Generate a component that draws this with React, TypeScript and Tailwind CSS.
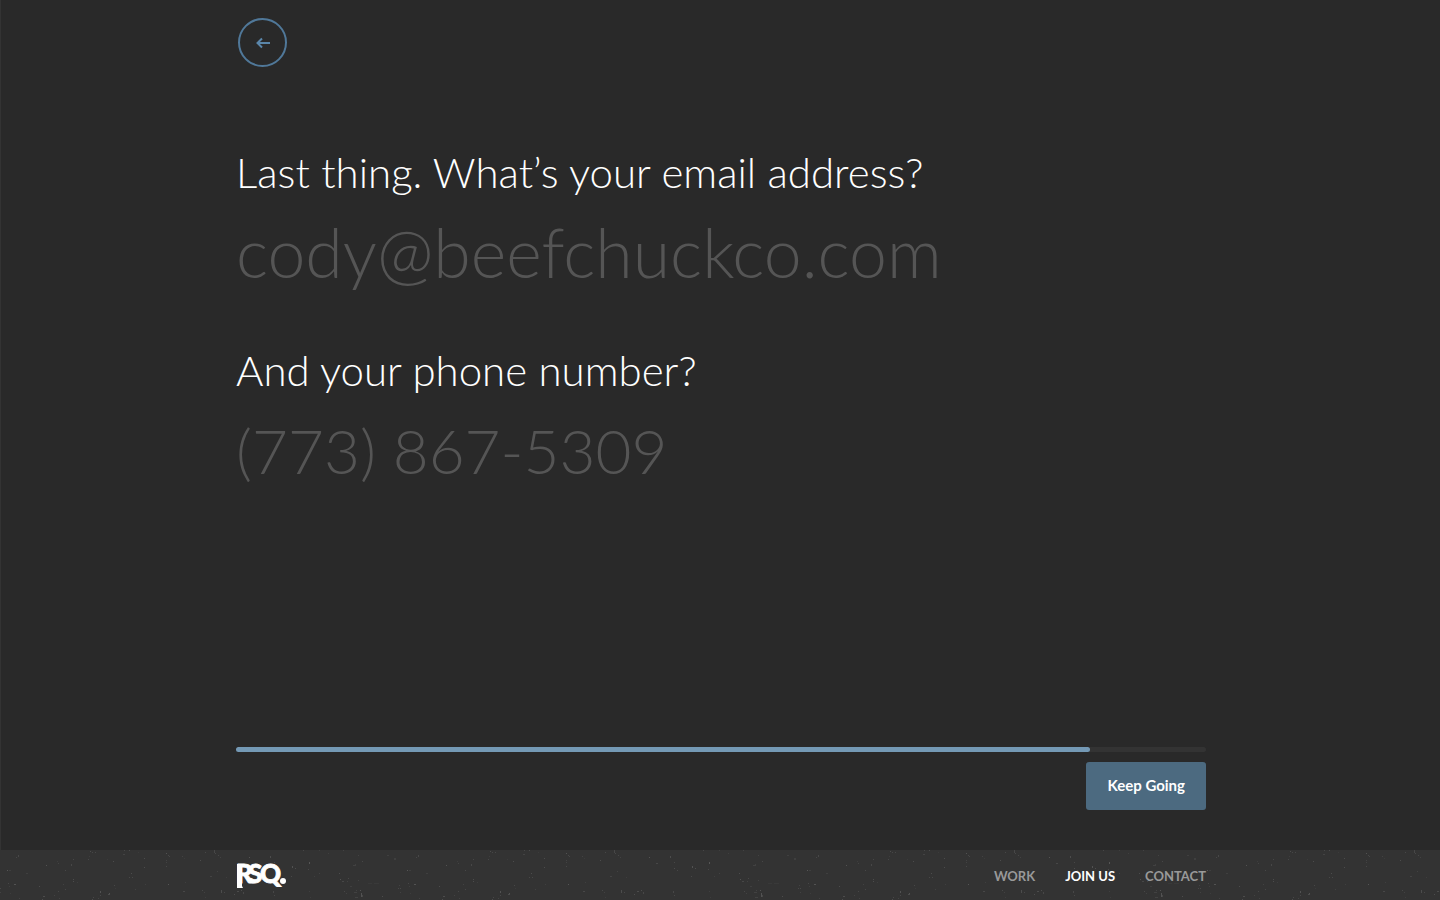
import { useState } from 'react';
import type { FormEvent } from 'react';

interface QuestionProps {
  id: string;
  type: string;
  label: string;
  placeholder: string;
  value: string;
  inputClass: string;
  onChange: (value: string) => void;
}

const NAV_LINKS = [
  { label: 'Work', href: '#work', active: false },
  { label: 'Join Us', href: '#join', active: true },
  { label: 'Contact', href: '#contact', active: false },
];

// x, y, width, height, opacity of each speck in the 400px paper tile
const SPECKS = [
  [18, 5, 1, 2, 0.2], [16, 7, 1, 1, 0.2], [7, 20, 1, 1, 0.35], [9, 20, 2, 1, 0.12],
  [26, 23, 2, 1, 0.12], [46, 15, 1, 1, 0.3], [57, 11, 1, 1, 0.1], [58, 13, 1, 1, 0.16],
  [71, 14, 1, 2, 0.2], [73, 9, 1, 1, 0.2], [65, 20, 1, 1, 0.2], [90, 1, 1, 1, 0.25],
  [92, 2, 1, 1, 0.2], [95, 2, 1, 1, 0.2], [88, 9, 1, 1, 0.2], [89, 6, 1, 1, 0.1],
  [107, 9, 1, 1, 0.08], [113, 11, 1, 1, 0.25], [124, 0, 1, 1, 0.2], [129, 0, 1, 1, 0.25],
  [123, 4, 2, 1, 0.16], [138, 2, 1, 1, 0.08], [144, 8, 1, 1, 0.25], [144, 17, 1, 1, 0.25],
  [131, 23, 1, 1, 0.25], [129, 27, 1, 1, 0.2], [132, 27, 1, 1, 0.2], [166, 3, 1, 1, 0.3],
  [168, 5, 1, 1, 0.2], [169, 6, 1, 1, 0.2], [166, 10, 1, 1, 0.15], [166, 12, 1, 1, 0.15],
  [166, 16, 1, 1, 0.2], [182, 6, 1, 1, 0.15], [184, 8, 1, 1, 0.08], [200, 10, 1, 1, 0.25],
  [205, 2, 1, 1, 0.2], [214, 0, 1, 3, 0.2], [215, 3, 1, 1, 0.2], [218, 5, 1, 1, 0.2],
  [220, 7, 1, 1, 0.15], [217, 21, 1, 1, 0.15], [210, 26, 2, 1, 0.16], [226, 27, 1, 1, 0.1],
  [8, 33, 1, 1, 0.2], [14, 34, 2, 1, 0.3], [9, 36, 1, 1, 0.12], [0, 38, 1, 1, 0.2],
  [0, 42, 1, 1, 0.15], [10, 43, 1, 1, 0.1], [19, 48, 1, 1, 0.16], [39, 36, 1, 1, 0.25],
  [43, 46, 2, 1, 0.25], [42, 49, 1, 1, 0.25], [54, 45, 1, 1, 0.15], [58, 41, 1, 1, 0.2],
  [59, 48, 1, 1, 0.15], [63, 34, 1, 1, 0.15], [65, 39, 1, 1, 0.2], [73, 29, 1, 1, 0.25],
  [73, 31, 1, 1, 0.25], [77, 32, 1, 1, 0.1], [100, 41, 1, 2, 0.3], [100, 45, 1, 1, 0.2],
  [98, 48, 1, 1, 0.16], [93, 47, 1, 1, 0.2], [92, 49, 1, 1, 0.25], [109, 43, 1, 1, 0.3],
  [108, 44, 2, 1, 0.25], [114, 35, 1, 1, 0.2], [115, 38, 1, 1, 0.08], [135, 39, 1, 1, 0.15],
  [145, 34, 1, 1, 0.12], [168, 34, 1, 1, 0.35], [183, 41, 2, 1, 0.2], [185, 32, 1, 1, 0.12],
  [202, 40, 1, 1, 0.2], [204, 42, 1, 1, 0.15], [221, 40, 1, 3, 0.25], [224, 42, 1, 1, 0.2],
  [205, 47, 1, 1, 0.1], [249, 7, 1, 1, 0.3], [256, 13, 2, 1, 0.2], [270, 6, 1, 2, 0.25],
  [274, 12, 1, 1, 0.2], [274, 18, 1, 1, 0.25], [277, 20, 1, 1, 0.2], [292, 16, 1, 2, 0.3],
  [295, 18, 1, 1, 0.25], [291, 26, 1, 1, 0.2], [234, 44, 1, 1, 0.25], [237, 41, 2, 1, 0.25],
  [241, 40, 1, 1, 0.25], [243, 42, 1, 2, 0.2], [273, 41, 1, 2, 0.2], [274, 45, 1, 1, 0.2],
  [303, 0, 1, 1, 0.2], [309, 12, 1, 2, 0.35], [308, 19, 1, 1, 0.2], [319, 0, 1, 1, 0.12],
  [319, 23, 1, 1, 0.15], [314, 26, 1, 1, 0.12], [328, 3, 1, 1, 0.12], [343, 0, 1, 1, 0.16],
  [353, 15, 3, 1, 0.14], [355, 14, 1, 1, 0.12], [362, 11, 1, 1, 0.2], [358, 5, 1, 1, 0.15],
  [387, 5, 2, 1, 0.12], [394, 8, 2, 2, 0.12], [339, 23, 1, 1, 0.25], [340, 29, 1, 1, 0.3],
  [342, 31, 2, 1, 0.2], [348, 28, 1, 1, 0.2], [347, 31, 1, 1, 0.15], [358, 30, 1, 1, 0.15],
  [344, 41, 1, 1, 0.2], [346, 43, 1, 1, 0.15], [350, 36, 2, 1, 0.12], [354, 42, 3, 1, 0.14],
  [356, 40, 1, 1, 0.15], [360, 40, 1, 1, 0.3], [361, 43, 1, 4, 0.3], [362, 45, 1, 2, 0.2],
  [355, 47, 3, 1, 0.15], [368, 33, 4, 1, 0.06], [374, 33, 5, 1, 0.06], [382, 46, 1, 1, 0.25],
  [398, 38, 1, 1, 0.2], [399, 35, 1, 1, 0.15], [309, 41, 1, 1, 0.12], [310, 47, 1, 1, 0.1],
];

function PaperTexture() {
  return (
    <svg aria-hidden="true" className="absolute inset-0 h-full w-full opacity-50" shapeRendering="crispEdges">
      <defs>
        <pattern id="paper" width="400" height="50" patternUnits="userSpaceOnUse">
          {SPECKS.map(([x, y, w, h, o], i) => (
            <rect key={i} x={x} y={y} width={w} height={h} fill="#fff" opacity={o} />
          ))}
        </pattern>
      </defs>
      <rect width="100%" height="100%" fill="url(#paper)" />
    </svg>
  );
}

function Logo() {
  return (
    <svg width="56" height="40" viewBox="0 0 56 40" fill="#fff" aria-hidden="true">
      <text
        x="0 12 24"
        y="28"
        fontFamily="Lato, sans-serif"
        fontWeight="900"
        fontSize="26"
        stroke="#fff"
        strokeWidth="0.8"
      >
        RSQ
      </text>
      <path d="M1 9h5v22l1 2H1z" />
      <circle cx="47" cy="26" r="3" />
    </svg>
  );
}

function Question({ id, type, label, placeholder, value, inputClass, onChange }: QuestionProps) {
  return (
    <div>
      <label htmlFor={id} className="block text-[42px] leading-[60px] font-light text-white">
        {label}
      </label>
      <input
        id={id}
        type={type}
        value={value}
        placeholder={placeholder}
        onChange={(e) => onChange(e.target.value)}
        className={`block h-24 w-full bg-transparent pt-1 font-light text-white outline-none placeholder:text-[#555] ${inputClass}`}
      />
    </div>
  );
}

export default function App() {
  const [email, setEmail] = useState('');
  const [phone, setPhone] = useState('');
  const progress = 88;

  const handleSubmit = (e: FormEvent) => {
    e.preventDefault();
  };

  return (
    <div className="flex min-h-screen flex-col bg-[#292929] font-[Lato,sans-serif]">
      <main className="flex flex-1 flex-col border-l border-[#333] pl-px">
        <form
          onSubmit={handleSubmit}
          className="mx-auto flex w-full max-w-[970px] flex-1 flex-col pt-[18px] pb-10"
        >
          <button
            type="button"
            aria-label="Back"
            className="ml-0.5 flex size-[49px] items-center justify-center rounded-full border-2 border-[#507899] text-[#5a86aa]"
          >
            <svg width="14" height="12" viewBox="0 0 14 12" fill="none" stroke="currentColor" strokeWidth="2">
              <path d="M14 6H2M6 1.500L1.500 6L6 10.500" />
            </svg>
          </button>

          <div className="mt-[75px] flex flex-col gap-[42px]">
            <Question
              id="email"
              type="email"
              label="Last thing. What’s your email address?"
              placeholder="cody@beefchuckco.com"
              value={email}
              inputClass="text-[68px]"
              onChange={setEmail}
            />
            <Question
              id="phone"
              type="tel"
              label="And your phone number?"
              placeholder="(773) 867-5309"
              value={phone}
              inputClass="text-[62px]"
              onChange={setPhone}
            />
          </div>

          <div className="mt-auto">
            <div className="h-[5px] rounded-sm bg-[#333]">
              <div className="h-full rounded-sm bg-[#7499b5]" style={{ width: `${progress}%` }} />
            </div>
            <div className="mt-2.5 flex justify-end">
              <button
                type="submit"
                className="h-12 rounded-[3px] bg-[#4c6a80] px-[21px] pb-0.5 text-[15px] font-bold text-white"
              >
                Keep Going
              </button>
            </div>
          </div>
        </form>
      </main>

      <footer className="relative bg-[#333] pl-0.5">
        <PaperTexture />
        <div className="relative mx-auto flex h-[50px] max-w-[970px] items-center justify-between">
          <a href="#home" aria-label="RSQ">
            <Logo />
          </a>
          <nav className="flex gap-[30px] pt-1 text-[13px] font-bold uppercase">
            {NAV_LINKS.map((link) => (
              <a key={link.href} href={link.href} className={link.active ? 'text-white' : 'text-[#999]'}>
                {link.label}
              </a>
            ))}
          </nav>
        </div>
      </footer>
    </div>
  );
}
